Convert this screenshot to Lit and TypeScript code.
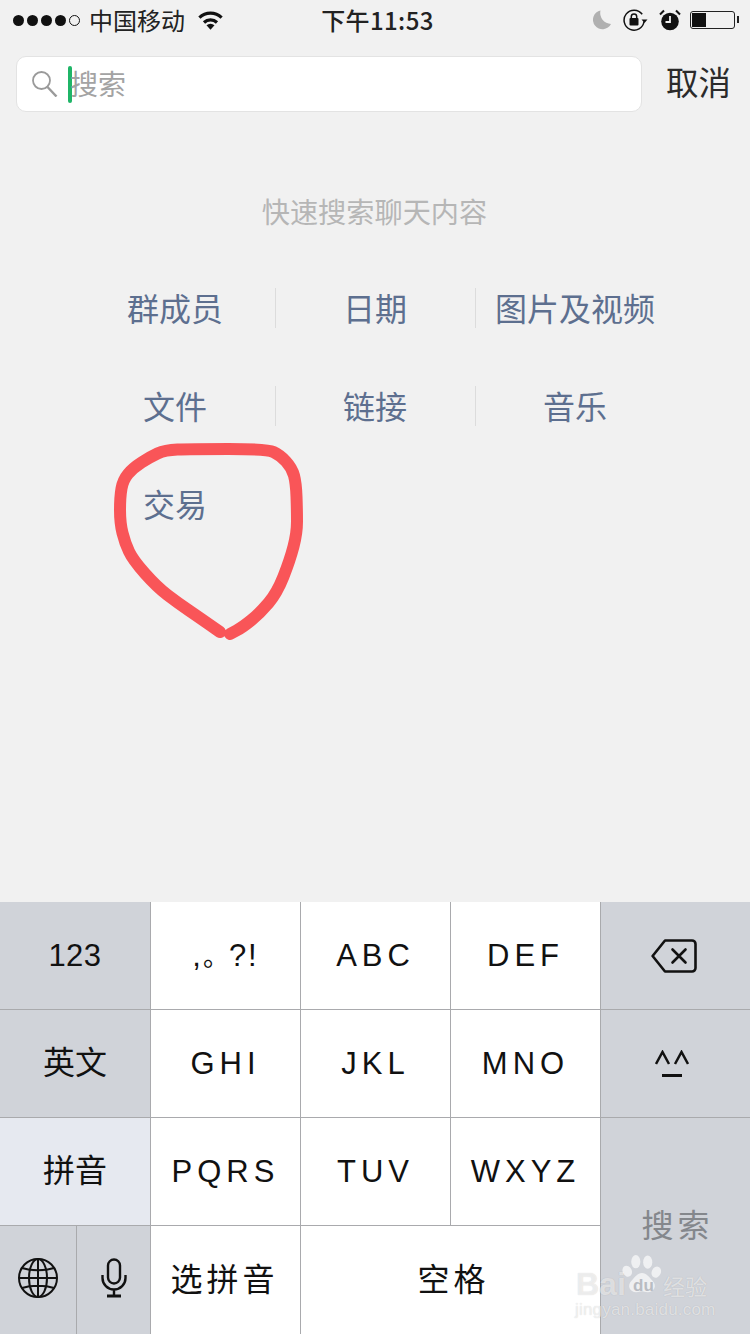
import { LitElement, html, css, svg } from "lit";
import { customElement } from "lit/decorators.js";

const filters = ["群成员", "日期", "图片及视频", "文件", "链接", "音乐", "交易"];

// points of the hand drawn red ring
const ring = [
  [220, 632], [200, 618], [178, 603], [157, 587], [133, 560], [125, 543], [120, 523],
  [120, 497], [123, 480], [133, 468], [150, 457], [165, 450], [190, 449], [267, 449],
  [280, 455], [292, 468], [296, 483], [297, 510], [297, 533], [290, 560], [277, 593],
  [260, 613], [243, 627], [230, 634],
];

const ringPath = () => {
  let d = `M${ring[0][0]} ${ring[0][1]}`;
  for (let i = 1; i < ring.length - 1; i++) {
    const mx = (ring[i][0] + ring[i + 1][0]) / 2;
    const my = (ring[i][1] + ring[i + 1][1]) / 2;
    d += ` Q${ring[i][0]} ${ring[i][1]} ${mx} ${my}`;
  }
  const last = ring[ring.length - 1];
  return `${d} L${last[0]} ${last[1]}`;
};

const globe = svg`<svg width="42" height="42" viewBox="0 0 42 42" fill="none" stroke="#111" stroke-width="2">
  <circle cx="21" cy="21" r="19"/>
  <ellipse cx="21" cy="21" rx="9" ry="19"/>
  <path d="M21 2v38M2 21h38M5 11c9 3 23 3 32 0M5 31c9-3 23-3 32 0"/>
</svg>`;

const mic = svg`<svg width="26" height="40" viewBox="0 0 26 40" fill="none" stroke="#111" stroke-width="2.4">
  <rect x="7" y="1.5" width="12" height="24" rx="6"/>
  <path d="M1.5 17v3a11.500 11.500 0 0 0 23 0v-3M13 31.500v6"/>
  <path d="M6 38h14" stroke-width="3"/>
</svg>`;

const backspace = svg`<svg width="46" height="34" viewBox="0 0 46 34" fill="none" stroke="#111" stroke-width="2.6" stroke-linejoin="round">
  <path d="M14 1.500H41a3.500 3.500 0 0 1 3.500 3.500V29a3.500 3.500 0 0 1-3.500 3.500H14L1.600 17z"/>
  <path d="M21.500 10.500l13 13M34.500 10.500l-13 13" stroke-linecap="round"/>
</svg>`;

const emoji = svg`<svg width="34" height="28" viewBox="0 0 34 28" fill="none" stroke="#111" stroke-width="2.500">
  <path d="M1 14L7.500 2L14 14M20 14L26.500 2L33 14"/>
  <path d="M7 25.500H27" stroke-width="3"/>
</svg>`;

const wifi = svg`<svg width="25" height="19" viewBox="0 0 25 19" fill="none" stroke="#111" stroke-width="3.200">
  <path d="M1.400 6.700a16 16 0 0 1 22.200 0"/>
  <path d="M6 11.500a9.500 9.500 0 0 1 13 0"/>
  <path d="M12.500 18.800l-4-4.600a6 6 0 0 1 8 0z" fill="#111" stroke="none"/>
</svg>`;

const moon = svg`<svg width="20" height="20" viewBox="0 0 20 20" fill="#b0b0b0">
  <path d="M8.500 .5A9.500 9.500 0 1 0 19 14A11 11 0 0 1 8.500 .5z"/>
</svg>`;

const rotationLock = svg`<svg width="25" height="22" viewBox="0 0 25 22" fill="none" stroke="#111" stroke-width="1.500">
  <path d="M21 12.500a10 10 0 1 1-1.800-7.200"/>
  <path d="M18.500 10.500h6l-3 3.600z" fill="#111" stroke="none"/>
  <rect x="6.500" y="9" width="9" height="7.500" rx="1" fill="#111" stroke="none"/>
  <path d="M8.300 9.500V7.600a2.700 2.700 0 0 1 5.400 0v1.900" />
</svg>`;

const alarm = svg`<svg width="22" height="22" viewBox="0 0 22 22">
  <circle cx="11" cy="12.500" r="8.800" fill="#111"/>
  <path d="M11 7v6H6.500" fill="none" stroke="#f1f1f1" stroke-width="1.800"/>
  <path d="M1 5.500L5 1.500M21 5.500L17 1.500" stroke="#111" stroke-width="2"/>
</svg>`;

const paw = svg`<svg width="40" height="44" viewBox="0 0 42 44" fill="rgba(255,255,255,.65)">
  <ellipse cx="14.500" cy="8" rx="4.800" ry="7"/>
  <ellipse cx="27" cy="8.500" rx="4.800" ry="7"/>
  <ellipse cx="5.500" cy="18" rx="4.800" ry="6" transform="rotate(-25 5.500 18)"/>
  <ellipse cx="36" cy="19" rx="4.800" ry="6" transform="rotate(25 36 19)"/>
  <path d="M21 20c5 0 7 4 11 8 5 5 2 12-5 12-3 0-4-1-6-1s-3 1-6 1c-7 0-10-7-5-12 4-4 6-8 11-8z"/>
</svg>`;

@customElement("app-root")
export class AppRoot extends LitElement {
  static styles = css`
    :host {
      display: block;
      width: 750px;
      height: 1334px;
      overflow: hidden;
      position: relative;
      background: #f1f1f1;
      color: #111;
      font-family: "Liberation Sans", "Noto Sans CJK SC", sans-serif;
    }
    .page {
      display: flex;
      flex-direction: column;
      height: 1334px;
    }

    .status {
      height: 40px;
      display: flex;
      align-items: center;
      padding: 0 13px;
      position: relative;
      font-size: 24px;
      flex: none;
    }
    .signal {
      display: flex;
      gap: 3px;
      margin-right: 9px;
    }
    .dot {
      width: 11px;
      height: 11px;
      border-radius: 50%;
      background: #111;
      box-sizing: border-box;
    }
    .dot.off {
      background: none;
      border: 1px solid #111;
    }
    .carrier {
      margin-right: 13px;
      font-family: "Noto Sans CJK SC", sans-serif;
      line-height: 34px;
      padding-bottom: 1px;
      color: #222;
    }
    .status svg {
      display: block;
    }
    .time {
      position: absolute;
      left: 5px;
      right: 0;
      text-align: center;
      font-family: "Noto Sans CJK SC", sans-serif;
      font-weight: 500;
      letter-spacing: 0.4px;
      line-height: 34px;
      color: #222;
    }
    .status-right {
      margin-left: auto;
      display: flex;
      align-items: center;
      margin-right: 2px;
    }
    .status-right .moon { margin-right: 11px; }
    .status-right .lock { margin-right: 11px; }
    .status-right .alarm { margin-right: 9px; }
    .battery {
      width: 45px;
      height: 18px;
      box-sizing: border-box;
      border: 1.500px solid #222;
      border-radius: 3px;
      padding: 1px;
      position: relative;
    }
    .battery i {
      display: block;
      height: 100%;
      width: 14px;
      background: #111;
    }
    .battery::after {
      content: "";
      position: absolute;
      right: -5px;
      top: 4px;
      width: 2px;
      height: 7px;
      background: #222;
    }

    .search-row {
      display: flex;
      align-items: center;
      margin-top: 16px;
      padding-left: 16px;
      height: 56px;
      flex: none;
    }
    .search-box {
      width: 626px;
      height: 56px;
      box-sizing: border-box;
      background: #fff;
      border: 1px solid #e3e3e3;
      border-radius: 10px;
      display: flex;
      align-items: center;
      padding-left: 15px;
    }
    .caret {
      width: 4px;
      height: 37px;
      background: #1fb567;
      border-radius: 2px;
      margin-left: 10px;
      margin-right: -2px;
    }
    .placeholder {
      font-size: 28px;
      line-height: 40px;
      padding-bottom: 3px;
      color: #a3a3a3;
      font-family: "Noto Sans CJK SC", sans-serif;
    }
    .cancel {
      flex: 1;
      text-align: center;
      font-size: 32.500px;
      line-height: 46px;
      padding: 0 0 7px 5px;
      color: #2b2b2b;
      font-family: "Noto Sans CJK SC", sans-serif;
    }

    .hint {
      margin-top: 77px;
      text-align: center;
      font-size: 28.200px;
      line-height: 44px;
      padding: 0 1px 2px 0;
      color: #b6b6b6;
      font-family: "Noto Sans CJK SC", sans-serif;
      flex: none;
    }
    .filters {
      margin: 53px 75px 0;
      display: grid;
      grid-template-columns: repeat(3, 200px);
      grid-auto-rows: 40px;
      row-gap: 58px;
      flex: none;
    }
    .filter {
      display: flex;
      align-items: center;
      justify-content: center;
      font-size: 32px;
      line-height: 40px;
      padding: 0 1px 3px 0;
      box-sizing: border-box;
      color: #5d6f8f;
      font-family: "Noto Sans CJK SC", sans-serif;
      border-left: 1px solid #dcdcdc;
    }
    .filter.first {
      border-left-color: transparent;
    }

    .keyboard {
      margin-top: auto;
      height: 432px;
      display: grid;
      grid-template-columns: repeat(5, 150px);
      grid-template-rows: 107px 108px 108px 109px;
      flex: none;
    }
    .key {
      display: flex;
      align-items: center;
      justify-content: center;
      background: #fff;
      box-sizing: border-box;
      border-left: 1px solid #a9aaad;
      border-top: 1px solid #a9aaad;
      font-size: 31px;
      color: #111;
      letter-spacing: 5px;
    }
    .key.cjk {
      font-family: "Noto Sans CJK SC", sans-serif;
      font-size: 32px;
      letter-spacing: 0;
      padding-bottom: 7px;
    }
    .key.spaced {
      letter-spacing: 4px;
      text-indent: -2px;
    }
    .key.fn {
      background: #d0d3d9;
    }
    .key.on {
      background: #e6e9f0;
    }
    .key.edge {
      border-left: none;
    }
    .key.top {
      border-top: none;
    }
    .key.tight {
      letter-spacing: 0.5px;
    }
    .key.punct {
      letter-spacing: 2px;
      line-height: 36px;
    }
    .key.punct span {
      display: inline-block;
      width: 26px;
      letter-spacing: 0;
      font-size: 26px;
      line-height: 30px;
    }
    .key.bs {
      padding-right: 3px;
    }
    .key.face {
      padding-right: 7px;
    }
    .key.go {
      grid-column: 5;
      grid-row: 3 / span 2;
      color: #84878c;
      align-items: flex-start;
      padding: 82px 0 0;
      text-indent: 4px;
    }
    .key.wide {
      grid-column: span 2;
      text-indent: 6px;
    }
    .tools {
      display: grid;
      grid-template-columns: 76px 74px;
      border-top: 1px solid #a9aaad;
      background: #d0d3d9;
    }
    .tool {
      display: flex;
      align-items: center;
      justify-content: center;
      padding-bottom: 4px;
    }
    .tool + .tool {
      border-left: 1px solid #a9aaad;
    }

    .ring {
      position: absolute;
      left: 0;
      top: 0;
      pointer-events: none;
    }
    .mark {
      position: absolute;
      left: 575px;
      top: 1252px;
      width: 140px;
      height: 68px;
      color: rgba(255, 255, 255, 0.6);
      text-shadow: 0 0 1px rgba(0, 0, 0, 0.18);
      pointer-events: none;
    }
    .mark .bai {
      position: absolute;
      left: 1px;
      top: 17px;
      font-size: 32px;
      line-height: 30px;
      font-weight: 700;
    }
    .mark svg {
      position: absolute;
      left: 47px;
      top: 1px;
    }
    .mark .du {
      position: absolute;
      left: 58px;
      top: 25px;
      font-size: 17px;
      line-height: 18px;
      font-weight: 700;
      color: #b9bcc2;
      text-shadow: none;
    }
    .mark .jy {
      position: absolute;
      left: 88px;
      top: 21px;
      font-size: 22px;
      line-height: 24px;
      font-family: "Noto Sans CJK SC", sans-serif;
    }
    .mark .url {
      position: absolute;
      left: 0;
      top: 49px;
      font-size: 17px;
      line-height: 17px;
      letter-spacing: 0.2px;
    }
  `;

  render() {
    return html`
      <div class="page">
        <div class="status">
          <div class="signal">
            <span class="dot"></span><span class="dot"></span><span class="dot"></span><span class="dot"></span>
            <span class="dot off"></span>
          </div>
          <span class="carrier">中国移动</span>
          ${wifi}
          <span class="time">下午11:53</span>
          <div class="status-right">
            <span class="moon">${moon}</span>
            <span class="lock">${rotationLock}</span>
            <span class="alarm">${alarm}</span>
            <div class="battery"><i></i></div>
          </div>
        </div>

        <div class="search-row">
          <div class="search-box">
            <svg width="26" height="26" viewBox="0 0 26 26" fill="none" stroke="#9a9a9a" stroke-width="1.800">
              <circle cx="9.500" cy="9.500" r="8.500"/>
              <path d="M15.500 16l9 9.500" stroke-width="2.400"/>
            </svg>
            <span class="caret"></span>
            <span class="placeholder">搜索</span>
          </div>
          <span class="cancel">取消</span>
        </div>

        <div class="hint">快速搜索聊天内容</div>

        <div class="filters">
          ${filters.map(
            (f, i) => html`<div class="filter ${i % 3 === 0 ? "first" : ""}">${f}</div>`
          )}
        </div>

        <div class="keyboard">
          <div class="key fn edge top tight">123</div>
          <div class="key top punct"><div>,<span>。</span>?!</div></div>
          <div class="key top">ABC</div>
          <div class="key top">DEF</div>
          <div class="key fn top bs">${backspace}</div>

          <div class="key fn edge cjk">英文</div>
          <div class="key">GHI</div>
          <div class="key">JKL</div>
          <div class="key">MNO</div>
          <div class="key fn face">${emoji}</div>

          <div class="key on edge cjk">拼音</div>
          <div class="key">PQRS</div>
          <div class="key">TUV</div>
          <div class="key">WXYZ</div>
          <div class="key fn cjk spaced go">搜索</div>

          <div class="tools">
            <div class="tool">${globe}</div>
            <div class="tool">${mic}</div>
          </div>
          <div class="key cjk spaced">选拼音</div>
          <div class="key cjk spaced wide">空格</div>
        </div>
      </div>

      <svg class="ring" width="750" height="1334" fill="none">
        <path d=${ringPath()} stroke="#f95558" stroke-width="12" stroke-linecap="round" stroke-linejoin="round"/>
      </svg>

      <div class="mark">
        <span class="bai">Bai</span>
        ${paw}
        <span class="du">du</span>
        <span class="jy">经验</span>
        <span class="url">jingyan.baidu.com</span>
      </div>
    `;
  }
}
